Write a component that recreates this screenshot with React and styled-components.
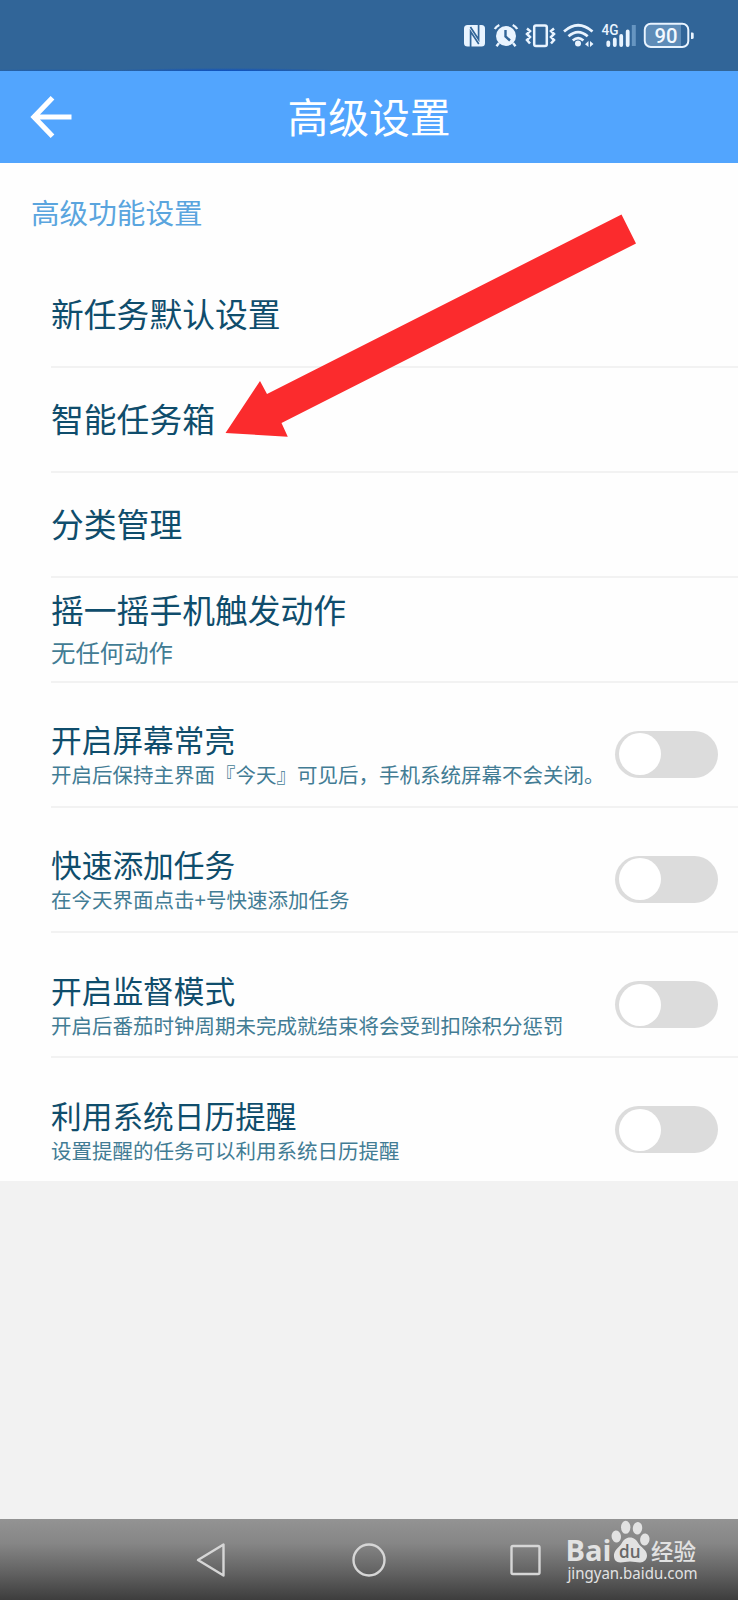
import { useState } from "react"
import styled, { createGlobalStyle } from "styled-components"

const GlobalStyle = createGlobalStyle`
  * {
    box-sizing: border-box;
  }

  body {
    margin: 0;
    background: #f2f2f2;
    font-family: "Noto Sans CJK SC", "Noto Sans", sans-serif;
  }
`

const links = [
  { title: "新任务默认设置" },
  { title: "智能任务箱" },
  { title: "分类管理" },
  { title: "摇一摇手机触发动作", note: "无任何动作" },
]

const toggles = [
  { title: "开启屏幕常亮", note: "开启后保持主界面『今天』可见后，手机系统屏幕不会关闭。" },
  { title: "快速添加任务", note: "在今天界面点击+号快速添加任务" },
  { title: "开启监督模式", note: "开启后番茄时钟周期未完成就结束将会受到扣除积分惩罚" },
  { title: "利用系统日历提醒", note: "设置提醒的任务可以利用系统日历提醒" },
]

const StatusIcons = () => (
  <svg width="234" height="28" viewBox="462 21 234 28" fill="none" stroke="#e9f4ff">
    {/* nfc */}
    <rect x="464" y="25" width="21" height="21.500" rx="3.500" fill="#e9f4ff" stroke="none" />
    <path d="M470.600 47V31.500l8.200 12.500M478.600 24v15.500l-8.200-12.500" stroke="#316598" strokeWidth="1.700" />
    {/* alarm */}
    <circle cx="506" cy="36" r="10" fill="#e9f4ff" stroke="none" />
    <path d="M494.800 29q1.500-2.600 4.500-4M517.200 29q-1.500-2.600-4.500-4M499 43l-2.500 3.300M513 43l2.500 3.300" strokeWidth="2.400" />
    <path d="M505.500 30v6.500l4.500 4" stroke="#316598" strokeWidth="2.400" />
    {/* vibrate */}
    <rect x="534.200" y="25.500" width="12.600" height="20.500" rx="1.800" strokeWidth="2.500" />
    <path d="M527 28.500l3 2.500-3 3 3 3-3 3 3 3.500M554 28.500l-3 2.500 3 3-3 3 3 3-3 3.500" strokeWidth="2.500" />
    {/* wifi */}
    <path d="M564 31.500q14-12.500 28.500 0M568.500 36.300q9.500-8.500 19.200 0M572.800 40.500q5.300-4.600 10.600 0" strokeWidth="2.700" />
    <circle cx="578" cy="43.500" r="3" fill="#e9f4ff" stroke="none" />
    <path d="M588.500 41v6l-3.500-2.800zM590 47v-6l3.500 3z" fill="#e9f4ff" stroke="none" />
    {/* signal */}
    <path d="M608.300 42.500v2.500M614.800 39.500v5.500M621.200 36v9M627.700 31.500v13.500" strokeWidth="3.800" strokeLinecap="round" />
    <path d="M633.800 25v21" stroke="#6695c1" strokeWidth="4" />
    <text x="601.500" y="35.300" fill="#e9f4ff" stroke="none" fontFamily="Roboto" fontSize="14.500" fontWeight="500" textLength="17" lengthAdjust="spacingAndGlyphs">4G</text>
    {/* battery */}
    <path d="M650 24h31v23h-31q-4 0-4-4V28q0-4 4-4z" fill="#5e8cb8" stroke="none" />
    <rect x="644.800" y="23.800" width="43.500" height="23.200" rx="6" strokeWidth="2" />
    <path d="M691 32.500h1q1.700 0 1.700 1.300v3.900q0 1.300-1.700 1.300h-1z" fill="#e9f4ff" stroke="none" />
    <text x="654.500" y="42.800" fill="#f3f9ff" stroke="none" fontFamily="Roboto" fontSize="21" fontWeight="500" textLength="23" lengthAdjust="spacingAndGlyphs">90</text>
  </svg>
)

const Watermark = () => (
  <StyledWatermark width="140" height="68" viewBox="563 1518 140 68" fill="#e2e2e2">
    <text x="565.500" y="1561" fontFamily="Open Sans" fontSize="29" fontWeight="700" textLength="46" lengthAdjust="spacingAndGlyphs">Bai</text>
    <ellipse cx="616.300" cy="1536.500" rx="4.700" ry="6" transform="rotate(-8 616.300 1536.500)" />
    <ellipse cx="625.700" cy="1527.300" rx="4.700" ry="6.500" />
    <ellipse cx="637.500" cy="1528.200" rx="4.700" ry="6.300" transform="rotate(6 637.500 1528.200)" />
    <ellipse cx="644.800" cy="1539.500" rx="4.700" ry="6" transform="rotate(8 644.800 1539.500)" />
    <path d="M630 1537.500c4 0 6.500 2.500 8.500 6 2.500 4 8.500 6.500 8.500 12 0 4-3 7-7 7-3.500 0-6-1-10-1s-6 1-9.500 1c-4.500 0-7-3-6.500-8 .5-4.500 5-7 7.500-11 2-3.500 4.500-6 8.500-6z" />
    <text x="619" y="1558" fill="#686868" fontFamily="Open Sans" fontSize="18" fontWeight="600" textLength="21.500" lengthAdjust="spacingAndGlyphs">du</text>
    <text x="651" y="1560" fontFamily="Noto Sans CJK SC" fontSize="22.500" fontWeight="500" textLength="45" lengthAdjust="spacingAndGlyphs">经验</text>
    <text x="567.500" y="1579" fontFamily="Noto Sans" fontSize="15.500" textLength="130" lengthAdjust="spacingAndGlyphs">jingyan.baidu.com</text>
  </StyledWatermark>
)

const ToggleRow = ({ title, note }) => {
  const [on, setOn] = useState(false)

  return (
    <Row $tall>
      <Texts>
        <ToggleTitle>{title}</ToggleTitle>
        <ToggleNote>{note}</ToggleNote>
      </Texts>
      <Switch type="button" role="switch" aria-checked={on} $on={on} onClick={() => setOn(!on)}>
        <Knob />
      </Switch>
    </Row>
  )
}

const App = () => {
  return (
    <Screen>
      <GlobalStyle />
      <StatusBar>
        <StatusIcons />
      </StatusBar>
      <Header>
        <BackButton type="button">
          <svg width="42" height="42" viewBox="0 0 42 42" fill="none" stroke="#fff" strokeWidth="5.200">
            <path d="M22.500 1.800L4 21l18.500 19.200M4 21h37.500" />
          </svg>
        </BackButton>
        <Title>高级设置</Title>
      </Header>
      <Panel>
        <SectionLabel>高级功能设置</SectionLabel>
        {links.map((item) => (
          <Row key={item.title}>
            <Texts>
              <LinkTitle $single={!item.note}>{item.title}</LinkTitle>
              {item.note && <LinkNote>{item.note}</LinkNote>}
            </Texts>
          </Row>
        ))}
        {toggles.map((item) => (
          <ToggleRow key={item.title} title={item.title} note={item.note} />
        ))}
        <Arrow width="420" height="230" viewBox="222 210 420 230">
          <path d="M225.500 433L260 381l7 13L621.500 214.500l14.500 29L281.500 423l6.300 13.700z" fill="#fb2b2d" />
        </Arrow>
      </Panel>
      <NavBar>
        <svg width="30" height="36" viewBox="0 0 30 36" fill="none" stroke="#d6d6d6" strokeWidth="2.400" strokeLinejoin="round">
          <path d="M27.500 2.500v31L2 18z" />
        </svg>
        <svg width="36" height="36" viewBox="0 0 36 36" fill="none" stroke="#d6d6d6" strokeWidth="2.400">
          <circle cx="19" cy="18" r="15.500" />
        </svg>
        <svg width="32" height="36" viewBox="0 0 32 36" fill="none" stroke="#d6d6d6" strokeWidth="2.400">
          <rect x="1.500" y="4" width="28" height="28" rx="1.500" />
        </svg>
        <Watermark />
      </NavBar>
    </Screen>
  )
}

const Screen = styled.div`
  display: flex;
  flex-direction: column;
  width: 738px;
  height: 1600px;
  overflow: hidden;
  background: #f2f2f2;
`

const StatusBar = styled.div`
  display: flex;
  justify-content: flex-end;
  height: 71px;
  padding: 21px 42px 0 0;
  background:
    radial-gradient(ellipse 125px 3px at 225px 71px, #0b50c4, transparent) no-repeat,
    radial-gradient(ellipse 90px 2px at 50px 71px, #1d5cae, transparent) no-repeat,
    #316598;
`

const Header = styled.header`
  display: grid;
  grid-template-columns: 100px 1fr 100px;
  align-items: center;
  height: 92px;
  background: #52a5fe;
`

const BackButton = styled.button`
  display: flex;
  width: 72px;
  padding: 0 0 0 30px;
  border: 0;
  background: none;
`

const Title = styled.h1`
  margin: 0;
  padding-bottom: 2px;
  color: #fff;
  font-size: 40.800px;
  font-weight: 400;
  line-height: 60px;
  text-align: center;
`

const Panel = styled.main`
  position: relative;
  height: 1018px;
  background: #fefefe;
`

const SectionLabel = styled.h2`
  height: 100.500px;
  margin: 0;
  padding: 28px 0 0 31px;
  color: #5aa5de;
  font-size: 28.600px;
  font-weight: 400;
  line-height: 42px;
`

const Row = styled.div`
  display: flex;
  align-items: center;
  justify-content: space-between;
  height: ${(props) => (props.$tall ? "125.250px" : "104.750px")};
  margin-left: 51px;
  padding-right: 20px;
  border-bottom: 2px solid #f2f2f2;

  &:nth-last-child(2) {
    border-bottom-color: transparent;
  }
`

const Texts = styled.div`
  display: flex;
  flex-direction: column;
  white-space: nowrap;
`

const LinkTitle = styled.span`
  padding-bottom: ${(props) => (props.$single ? "3px" : "0")};
  color: #0f4d6c;
  font-size: 32.800px;
  line-height: 46px;
`

const LinkNote = styled.span`
  color: #427c94;
  font-size: 24.400px;
  line-height: 40px;
`

const ToggleTitle = styled.span`
  padding-top: 24px;
  color: #0f4d6c;
  font-size: 30.700px;
  line-height: 36px;
`

const ToggleNote = styled.span`
  color: #427c94;
  font-size: 20.500px;
  line-height: 34px;
`

const Switch = styled.button`
  width: 103px;
  height: 47px;
  margin-top: 20px;
  padding: 0 4px;
  border: 0;
  border-radius: 24px;
  background: ${(props) => (props.$on ? "#52a5fe" : "#dcdcdc")};
  text-align: ${(props) => (props.$on ? "right" : "left")};
  line-height: 0;
`

const Knob = styled.span`
  display: inline-block;
  width: 42px;
  height: 42px;
  border-radius: 50%;
  background: #fff;
`

const Arrow = styled.svg`
  position: absolute;
  top: 47px;
  left: 222px;
  pointer-events: none;
`

const NavBar = styled.nav`
  position: relative;
  display: flex;
  align-items: flex-start;
  justify-content: space-between;
  height: 81px;
  margin-top: auto;
  padding: 22.500px 196px 0 196px;
  background: linear-gradient(#939393, #868686 30%, #636363 65%, #3d3d3d);
`

const StyledWatermark = styled.svg`
  position: absolute;
  top: -1px;
  left: 563px;
`

export default App
